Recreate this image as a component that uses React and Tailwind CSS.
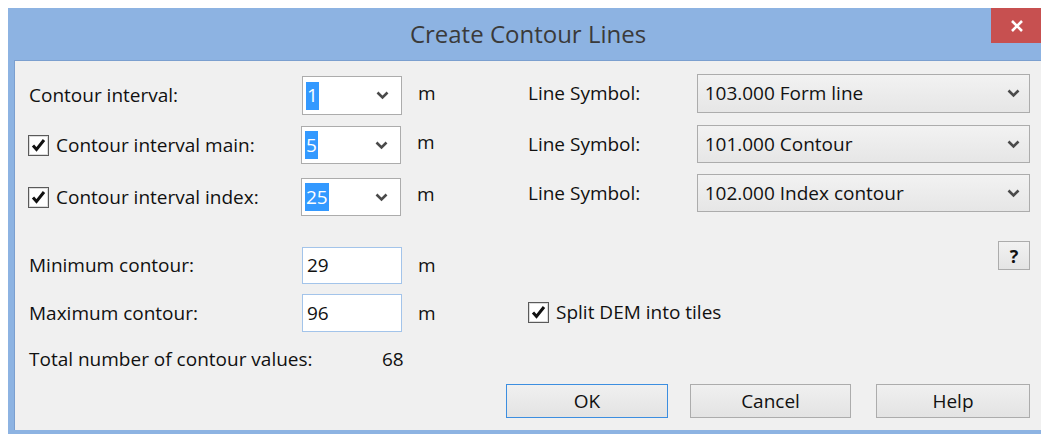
import React from "react";

const FONT = { fontFamily: '"Open Sans", "Noto Sans", "Liberation Sans", sans-serif' };

function Chevron() {
  return (
    <svg width="13" height="9" viewBox="0 0 13 9" className="shrink-0">
      <path d="M1.5 1.5 L6.5 6.5 L11.5 1.5" fill="none" stroke="#4a4a4a" strokeWidth="2.6" />
    </svg>
  );
}

function Check() {
  return (
    <div className="w-[21px] h-[21px] border border-[#5a5a5a] bg-white flex items-center justify-center shrink-0 shadow-[inset_0_0_0_1px_#dcdcdc]">
      <svg width="15" height="14" viewBox="0 0 15 14">
        <path d="M2 7.5 L5.5 11.5 L13 2" fill="none" stroke="#111" strokeWidth="3" />
      </svg>
    </div>
  );
}

function Combo({ value }) {
  return (
    <div className="w-[100px] h-full bg-white border border-[#acacac] flex items-center pl-[3px] pr-[12px] justify-between">
      <span className="bg-[#3399ff] text-white h-[28px] flex items-center px-[1px] leading-none">{value}</span>
      <Chevron />
    </div>
  );
}

function Field({ value }) {
  return (
    <div className="w-[100px] h-full bg-white border border-[#a3c4ea] flex items-center pl-[4px]">
      <span>{value}</span>
    </div>
  );
}

function SymbolSelect({ value }) {
  return (
    <div className="w-[334px] h-full border border-[#acacac] bg-gradient-to-b from-[#f2f2f2] to-[#e6e6e6] flex items-center justify-between pl-[7px] pr-[9px]">
      <span>{value}</span>
      <Chevron />
    </div>
  );
}

function Button({ children, w, primary }) {
  return (
    <div
      className={
        "h-[34px] flex items-center justify-center bg-gradient-to-b from-[#f0f0f0] to-[#e3e3e3] border " +
        (primary ? "border-[#3c8ee0]" : "border-[#acacac]")
      }
      style={{ width: w }}
    >
      {children}
    </div>
  );
}

export default function App() {
  return (
    <div className="w-[1041px] h-[434px] overflow-hidden bg-white text-[19px] leading-none text-[#111]" style={FONT}>
      <div className="relative ml-[8px] mt-[8px] w-[1040px] h-[432px] bg-[#8db3e2] flex flex-col">
        {/* title bar */}
        <div className="h-[52px] flex items-center justify-center text-[24px] text-[#3a3a3a] shrink-0">
          Create Contour Lines
        </div>
        <div className="absolute top-0 right-[6px] w-[51px] h-[35px] bg-[#c75050] flex items-center justify-center">
          <svg width="14" height="12" viewBox="0 0 14 12">
            <path d="M2 1 L12 11 M12 1 L2 11" stroke="#fff" strokeWidth="2.6" />
          </svg>
        </div>

        {/* client area */}
        <div className="mx-[6px] h-[370px] bg-[#f0f0f0] border-l border-t border-[#7b9fcf] flex pl-[14px]">
          {/* left column */}
          <div className="w-[477px] flex flex-col">
            <div className="mt-[15px] h-[39px] flex items-center">
              <span className="w-[273px]">Contour interval:</span>
              <Combo value="1" />
              <span className="ml-[16px] -mt-[5px]">m</span>
            </div>
            <div className="mt-[11px] h-[38px] flex items-center">
              <div className="w-[273px] flex items-center gap-[7px] -ml-[1px]">
                <Check />
                <span>Contour interval main:</span>
              </div>
              <Combo value="5" />
              <span className="ml-[16px] -mt-[5px]">m</span>
            </div>
            <div className="mt-[14px] h-[38px] flex items-center">
              <div className="w-[273px] flex items-center gap-[7px] -ml-[1px]">
                <Check />
                <span>Contour interval index:</span>
              </div>
              <Combo value="25" />
              <span className="ml-[16px] -mt-[5px]">m</span>
            </div>
            <div className="mt-[31px] h-[37px] flex items-center">
              <span className="w-[273px]">Minimum contour:</span>
              <Field value="29" />
              <span className="ml-[16px]">m</span>
            </div>
            <div className="mt-[10px] h-[38px] flex items-center">
              <span className="w-[273px]">Maximum contour:</span>
              <Field value="96" />
              <span className="ml-[16px]">m</span>
            </div>
            <div className="mt-[12px] h-[30px] flex items-center">
              <span className="w-[353px]">Total number of contour values:</span>
              <span>68</span>
            </div>
          </div>

          {/* right column */}
          <div className="w-[524px] flex flex-col">
            <div className="mt-[13px] h-[39px] flex items-center pl-[22px]">
              <span className="w-[169px]">Line Symbol:</span>
              <SymbolSelect value="103.000 Form line" />
            </div>
            <div className="mt-[12px] h-[38px] flex items-center pl-[22px]">
              <span className="w-[169px]">Line Symbol:</span>
              <SymbolSelect value="101.000 Contour" />
            </div>
            <div className="mt-[11px] h-[38px] flex items-center pl-[22px]">
              <span className="w-[169px]">Line Symbol:</span>
              <SymbolSelect value="102.000 Index contour" />
            </div>
            <div className="mt-[29px] h-[29px] flex justify-end">
              <div className="w-[32px] h-full border border-[#acacac] bg-gradient-to-b from-[#f2f2f2] to-[#e4e4e4] flex items-center justify-center font-bold text-[18px]">
                ?
              </div>
            </div>
            <div className="mt-[31px] h-[22px] flex items-center pl-[22px] gap-[7px]">
              <Check />
              <span>Split DEM into tiles</span>
            </div>
            <div className="mt-[61px] flex">
              <Button w={162} primary>OK</Button>
              <div className="w-[22px]" />
              <Button w={161}>Cancel</Button>
              <div className="w-[25px]" />
              <Button w={154}>Help</Button>
            </div>
          </div>
        </div>
      </div>
    </div>
  );
}
